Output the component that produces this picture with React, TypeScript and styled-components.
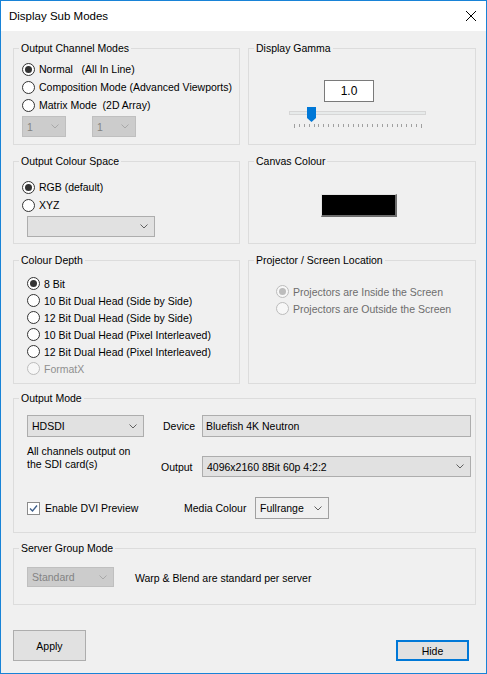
import React from 'react';
import styled, { createGlobalStyle } from 'styled-components';

const GlobalStyle = createGlobalStyle`
  html, body {
    margin: 0;
    padding: 0;
    background: #f0f0f0;
  }
  body {
    font-family: "Liberation Sans", Arial, sans-serif;
    font-size: 10.5px;
    color: #000;
  }
`;

const Window = styled.div`
  width: 487px;
  height: 674px;
  box-sizing: border-box;
  border: 1px solid #1883d7;
  background: #f0f0f0;
  display: flex;
  flex-direction: column;
  overflow: hidden;
`;

const TitleBar = styled.div`
  height: 30px;
  flex-shrink: 0;
  background: #fff;
  display: flex;
  align-items: center;
  justify-content: space-between;
  padding: 0 10px 0 8px;
`;

const Title = styled.span`
  font-size: 11.5px;
`;

const Body = styled.div`
  display: flex;
  flex-direction: column;
  padding: 11px 10px 0 12px;
`;

const Grid = styled.div`
  display: grid;
  grid-template-columns: 227px 228px;
  column-gap: 8px;
  row-gap: 10px;
`;

const Group = styled.fieldset<{ $h: number; $mt?: number }>`
  margin: ${(p) => p.$mt ?? 0}px 0 0;
  padding: 0;
  min-width: 0;
  height: ${(p) => p.$h}px;
  box-sizing: border-box;
  border: 1px solid #dcdcdc;
`;

const Legend = styled.legend`
  margin-left: 5px;
  padding: 0 2px;
  line-height: 13px;
  font-size: 10.5px;
`;

const Stack = styled.div<{ $pt: number; $pl: number }>`
  display: flex;
  flex-direction: column;
  align-items: flex-start;
  padding: ${(p) => p.$pt}px 0 0 ${(p) => p.$pl}px;
`;

const RadioRow = styled.div<{ $h: number; $disabled?: boolean; $tone?: string }>`
  display: flex;
  align-items: center;
  gap: 4px;
  height: ${(p) => p.$h}px;
  white-space: pre;
  color: ${(p) => (p.$disabled ? p.$tone ?? '#6d6d6d' : '#000')};
`;

const RadioCircle = styled.span<{ $checked?: boolean; $disabled?: boolean }>`
  width: 13px;
  height: 13px;
  box-sizing: border-box;
  flex-shrink: 0;
  border-radius: 50%;
  border: 1px solid ${(p) => (p.$disabled ? '#bcbcbc' : '#333')};
  background: ${(p) => (p.$disabled ? '#f7f7f7' : '#fff')};
  display: flex;
  align-items: center;
  justify-content: center;

  &::after {
    content: '';
    display: ${(p) => (p.$checked ? 'block' : 'none')};
    width: 7px;
    height: 7px;
    border-radius: 50%;
    background: ${(p) => (p.$disabled ? '#bcbcbc' : '#333')};
  }
`;

const Radio: React.FC<{
  label: string;
  checked?: boolean;
  disabled?: boolean;
  h: number;
  tone?: string;
}> = ({ label, checked, disabled, h, tone }) => (
  <RadioRow $h={h} $disabled={disabled} $tone={tone}>
    <RadioCircle $checked={checked} $disabled={disabled} />
    <span>{label}</span>
  </RadioRow>
);

const ComboBox = styled.div<{
  $w: number;
  $h: number;
  $disabled?: boolean;
  $light?: boolean;
  $mt?: number;
  $ml?: number;
}>`
  width: ${(p) => p.$w}px;
  height: ${(p) => p.$h}px;
  margin: ${(p) => p.$mt ?? 0}px 0 0 ${(p) => p.$ml ?? 0}px;
  box-sizing: border-box;
  flex-shrink: 0;
  display: flex;
  align-items: center;
  justify-content: space-between;
  padding: 0 6px 0 4px;
  border: 1px solid ${(p) => (p.$disabled ? '#bfbfbf' : p.$light ? '#a0a0a0' : '#adadad')};
  background: ${(p) => (p.$disabled ? '#cccccc' : p.$light ? '#f0f0f0' : '#e1e1e1')};
  color: ${(p) => (p.$disabled ? '#838383' : '#000')};
  white-space: pre;
`;

const Chevron: React.FC<{ color: string }> = ({ color }) => (
  <svg width="8" height="5" viewBox="0 0 8 5">
    <polyline points="0.5,0.5 4,4 7.5,0.5" fill="none" stroke={color} strokeWidth="1" />
  </svg>
);

const Combo: React.FC<{
  w: number;
  h: number;
  value?: string;
  disabled?: boolean;
  light?: boolean;
  mt?: number;
  ml?: number;
}> = ({ w, h, value = '', disabled, light, mt, ml }) => (
  <ComboBox $w={w} $h={h} $disabled={disabled} $light={light} $mt={mt} $ml={ml}>
    <span>{value}</span>
    <Chevron color={disabled ? '#a8a8a8' : '#606060'} />
  </ComboBox>
);

const ComboPair = styled.div`
  display: flex;
  gap: 26px;
  margin-top: 2px;
`;

/* gamma */
const ValueBox = styled.div`
  margin-left: 35px;
  width: 50px;
  height: 22px;
  box-sizing: border-box;
  border: 1px solid #7a7a7a;
  background: #fff;
  display: flex;
  align-items: center;
  justify-content: center;
  font-size: 12px;
`;

const SliderTrack = styled.div`
  position: relative;
  margin-top: 9px;
  width: 137px;
  height: 4px;
  box-sizing: border-box;
  border: 1px solid #d6d6d6;
  background: #e7eaea;
`;

const Thumb = styled.svg`
  position: absolute;
  left: 17px;
  top: -5px;
`;

const Ticks = styled.svg`
  margin: 9px 0 0 5px;
  display: block;
`;

const TickMarks: React.FC = () => {
  const n = 27;
  const span = 127;
  return (
    <Ticks width="128" height="4" viewBox="0 0 128 4">
      {Array.from({ length: n }).map((_, i) => {
        const x = Math.round((i * span) / (n - 1)) + 0.5;
        const end = i === 0 || i === n - 1;
        return <line key={i} x1={x} x2={x} y1={0} y2={end ? 4 : 3} stroke="#a0a0a0" strokeWidth="1" />;
      })}
    </Ticks>
  );
};

/* canvas colour */
const Swatch = styled.div`
  margin: 26px 0 0 72px;
  width: 76px;
  height: 23px;
  box-sizing: border-box;
  background: #000;
  border-style: solid;
  border-width: 1px 2px 2px 1px;
  border-color: #e3e3e3 #6d6d6d #6d6d6d #e3e3e3;
`;

/* output mode */
const ModeRow = styled.div<{ $mt?: number; $top?: boolean }>`
  display: flex;
  align-items: ${(p) => (p.$top ? 'flex-start' : 'center')};
  margin-top: ${(p) => p.$mt ?? 0}px;
`;

const Cell = styled.div<{ $w: number }>`
  width: ${(p) => p.$w}px;
  flex-shrink: 0;
  display: flex;
  align-items: center;
`;

const Field = styled.div<{ $w: number; $h: number }>`
  width: ${(p) => p.$w}px;
  height: ${(p) => p.$h}px;
  box-sizing: border-box;
  border: 1px solid #adadad;
  background: #e3e3e3;
  display: flex;
  align-items: center;
  padding-left: 3px;
`;

const Note = styled.div`
  line-height: 13px;
`;

const LabelledCombo = styled.div`
  display: flex;
  align-items: center;
  margin-top: 11px;
`;

const CheckBox = styled.span`
  width: 13px;
  height: 13px;
  box-sizing: border-box;
  border: 1px solid #8b8b8b;
  background: #fff;
  display: flex;
  align-items: center;
  justify-content: center;
  margin-right: 5px;
  flex-shrink: 0;
`;

const ServerText = styled.span`
  margin-left: 21px;
  margin-top: 2px;
`;

const ButtonRow = styled.div`
  display: flex;
  justify-content: space-between;
  align-items: flex-end;
  margin-top: 25px;
  padding-right: 7px;
`;

const Button = styled.button<{ $h: number; $default?: boolean }>`
  width: 73px;
  height: ${(p) => p.$h}px;
  box-sizing: border-box;
  margin: 0;
  padding: 0;
  font-family: inherit;
  font-size: 10.5px;
  color: #000;
  background: #e1e1e1;
  border: ${(p) => (p.$default ? '2px solid #0078d7' : '1px solid #adadad')};
`;

const App: React.FC = () => {
  return (
    <>
      <GlobalStyle />
      <Window>
        <TitleBar>
          <Title>Display Sub Modes</Title>
          <svg width="10" height="10" viewBox="0 0 10 10">
            <line x1="0" y1="0" x2="10" y2="10" stroke="#000" strokeWidth="1" />
            <line x1="10" y1="0" x2="0" y2="10" stroke="#000" strokeWidth="1" />
          </svg>
        </TitleBar>
        <Body>
          <Grid>
            <Group $h={103}>
              <Legend>Output Channel Modes</Legend>
              <Stack $pt={5} $pl={8}>
                <Radio h={18} checked label="Normal   (All In Line)" />
                <Radio h={18} label="Composition Mode (Advanced Viewports)" />
                <Radio h={18} label="Matrix Mode  (2D Array)" />
                <ComboPair>
                  <Combo w={44} h={21} value="1" disabled />
                  <Combo w={44} h={21} value="1" disabled />
                </ComboPair>
              </Stack>
            </Group>
            <Group $h={103}>
              <Legend>Display Gamma</Legend>
              <Stack $pt={25} $pl={40}>
                <ValueBox>1.0</ValueBox>
                <SliderTrack>
                  <Thumb width="9" height="15" viewBox="0 0 9 15">
                    <path d="M0 0 H9 V11 L4.5 15 L0 11 Z" fill="#0078d7" />
                  </Thumb>
                </SliderTrack>
                <TickMarks />
              </Stack>
            </Group>

            <Group $h={89}>
              <Legend>Output Colour Space</Legend>
              <Stack $pt={10} $pl={8}>
                <Radio h={18} checked label="RGB (default)" />
                <Radio h={18} label="XYZ" />
                <Combo w={128} h={21} mt={2} ml={5} />
              </Stack>
            </Group>
            <Group $h={89}>
              <Legend>Canvas Colour</Legend>
              <Swatch />
            </Group>

            <Group $h={130}>
              <Legend>Colour Depth</Legend>
              <Stack $pt={8} $pl={13}>
                <Radio h={17} checked label="8 Bit" />
                <Radio h={17} label="10 Bit Dual Head (Side by Side)" />
                <Radio h={17} label="12 Bit Dual Head (Side by Side)" />
                <Radio h={17} label="10 Bit Dual Head (Pixel Interleaved)" />
                <Radio h={17} label="12 Bit Dual Head (Pixel Interleaved)" />
                <Radio h={17} disabled tone="#8f8f8f" label="FormatX" />
              </Stack>
            </Group>
            <Group $h={130}>
              <Legend>Projector / Screen Location</Legend>
              <Stack $pt={16} $pl={27}>
                <Radio h={17} checked disabled label="Projectors are Inside the Screen" />
                <Radio h={17} disabled label="Projectors are Outside the Screen" />
              </Stack>
            </Group>
          </Grid>

          <Group $h={141} $mt={8}>
            <Legend>Output Mode</Legend>
            <Stack $pt={10} $pl={13}>
              <ModeRow>
                <Cell $w={136}>
                  <Combo w={117} h={22} value="HDSDI" />
                </Cell>
                <Cell $w={39}>Device</Cell>
                <Field $w={269} $h={22}>Bluefish 4K Neutron</Field>
              </ModeRow>
              <ModeRow $mt={8} $top>
                <Cell $w={134}>
                  <Note>
                    All channels output on
                    <br />
                    the SDI card(s)
                  </Note>
                </Cell>
                <LabelledCombo>
                  <Cell $w={41}>Output</Cell>
                  <Combo w={269} h={21} value="4096x2160 8Bit 60p 4:2:2" />
                </LabelledCombo>
              </ModeRow>
              <ModeRow $mt={20}>
                <Cell $w={157}>
                  <CheckBox>
                    <svg width="9" height="9" viewBox="0 0 9 9">
                      <polyline points="1,4.5 3.5,7 8,1.5" fill="none" stroke="#3e5f8a" strokeWidth="1.4" />
                    </svg>
                  </CheckBox>
                  <span>Enable DVI Preview</span>
                </Cell>
                <Cell $w={71}>Media Colour</Cell>
                <Combo w={74} h={22} value="Fullrange" light />
              </ModeRow>
            </Stack>
          </Group>

          <Group $h={63} $mt={9}>
            <Legend>Server Group Mode</Legend>
            <Stack $pt={12} $pl={13}>
              <ModeRow>
                <Combo w={87} h={20} value="Standard" disabled />
                <ServerText>Warp &amp; Blend are standard per server</ServerText>
              </ModeRow>
            </Stack>
          </Group>

          <ButtonRow>
            <Button $h={31}>Apply</Button>
            <Button $h={21} $default>
              Hide
            </Button>
          </ButtonRow>
        </Body>
      </Window>
    </>
  );
};

export default App;
